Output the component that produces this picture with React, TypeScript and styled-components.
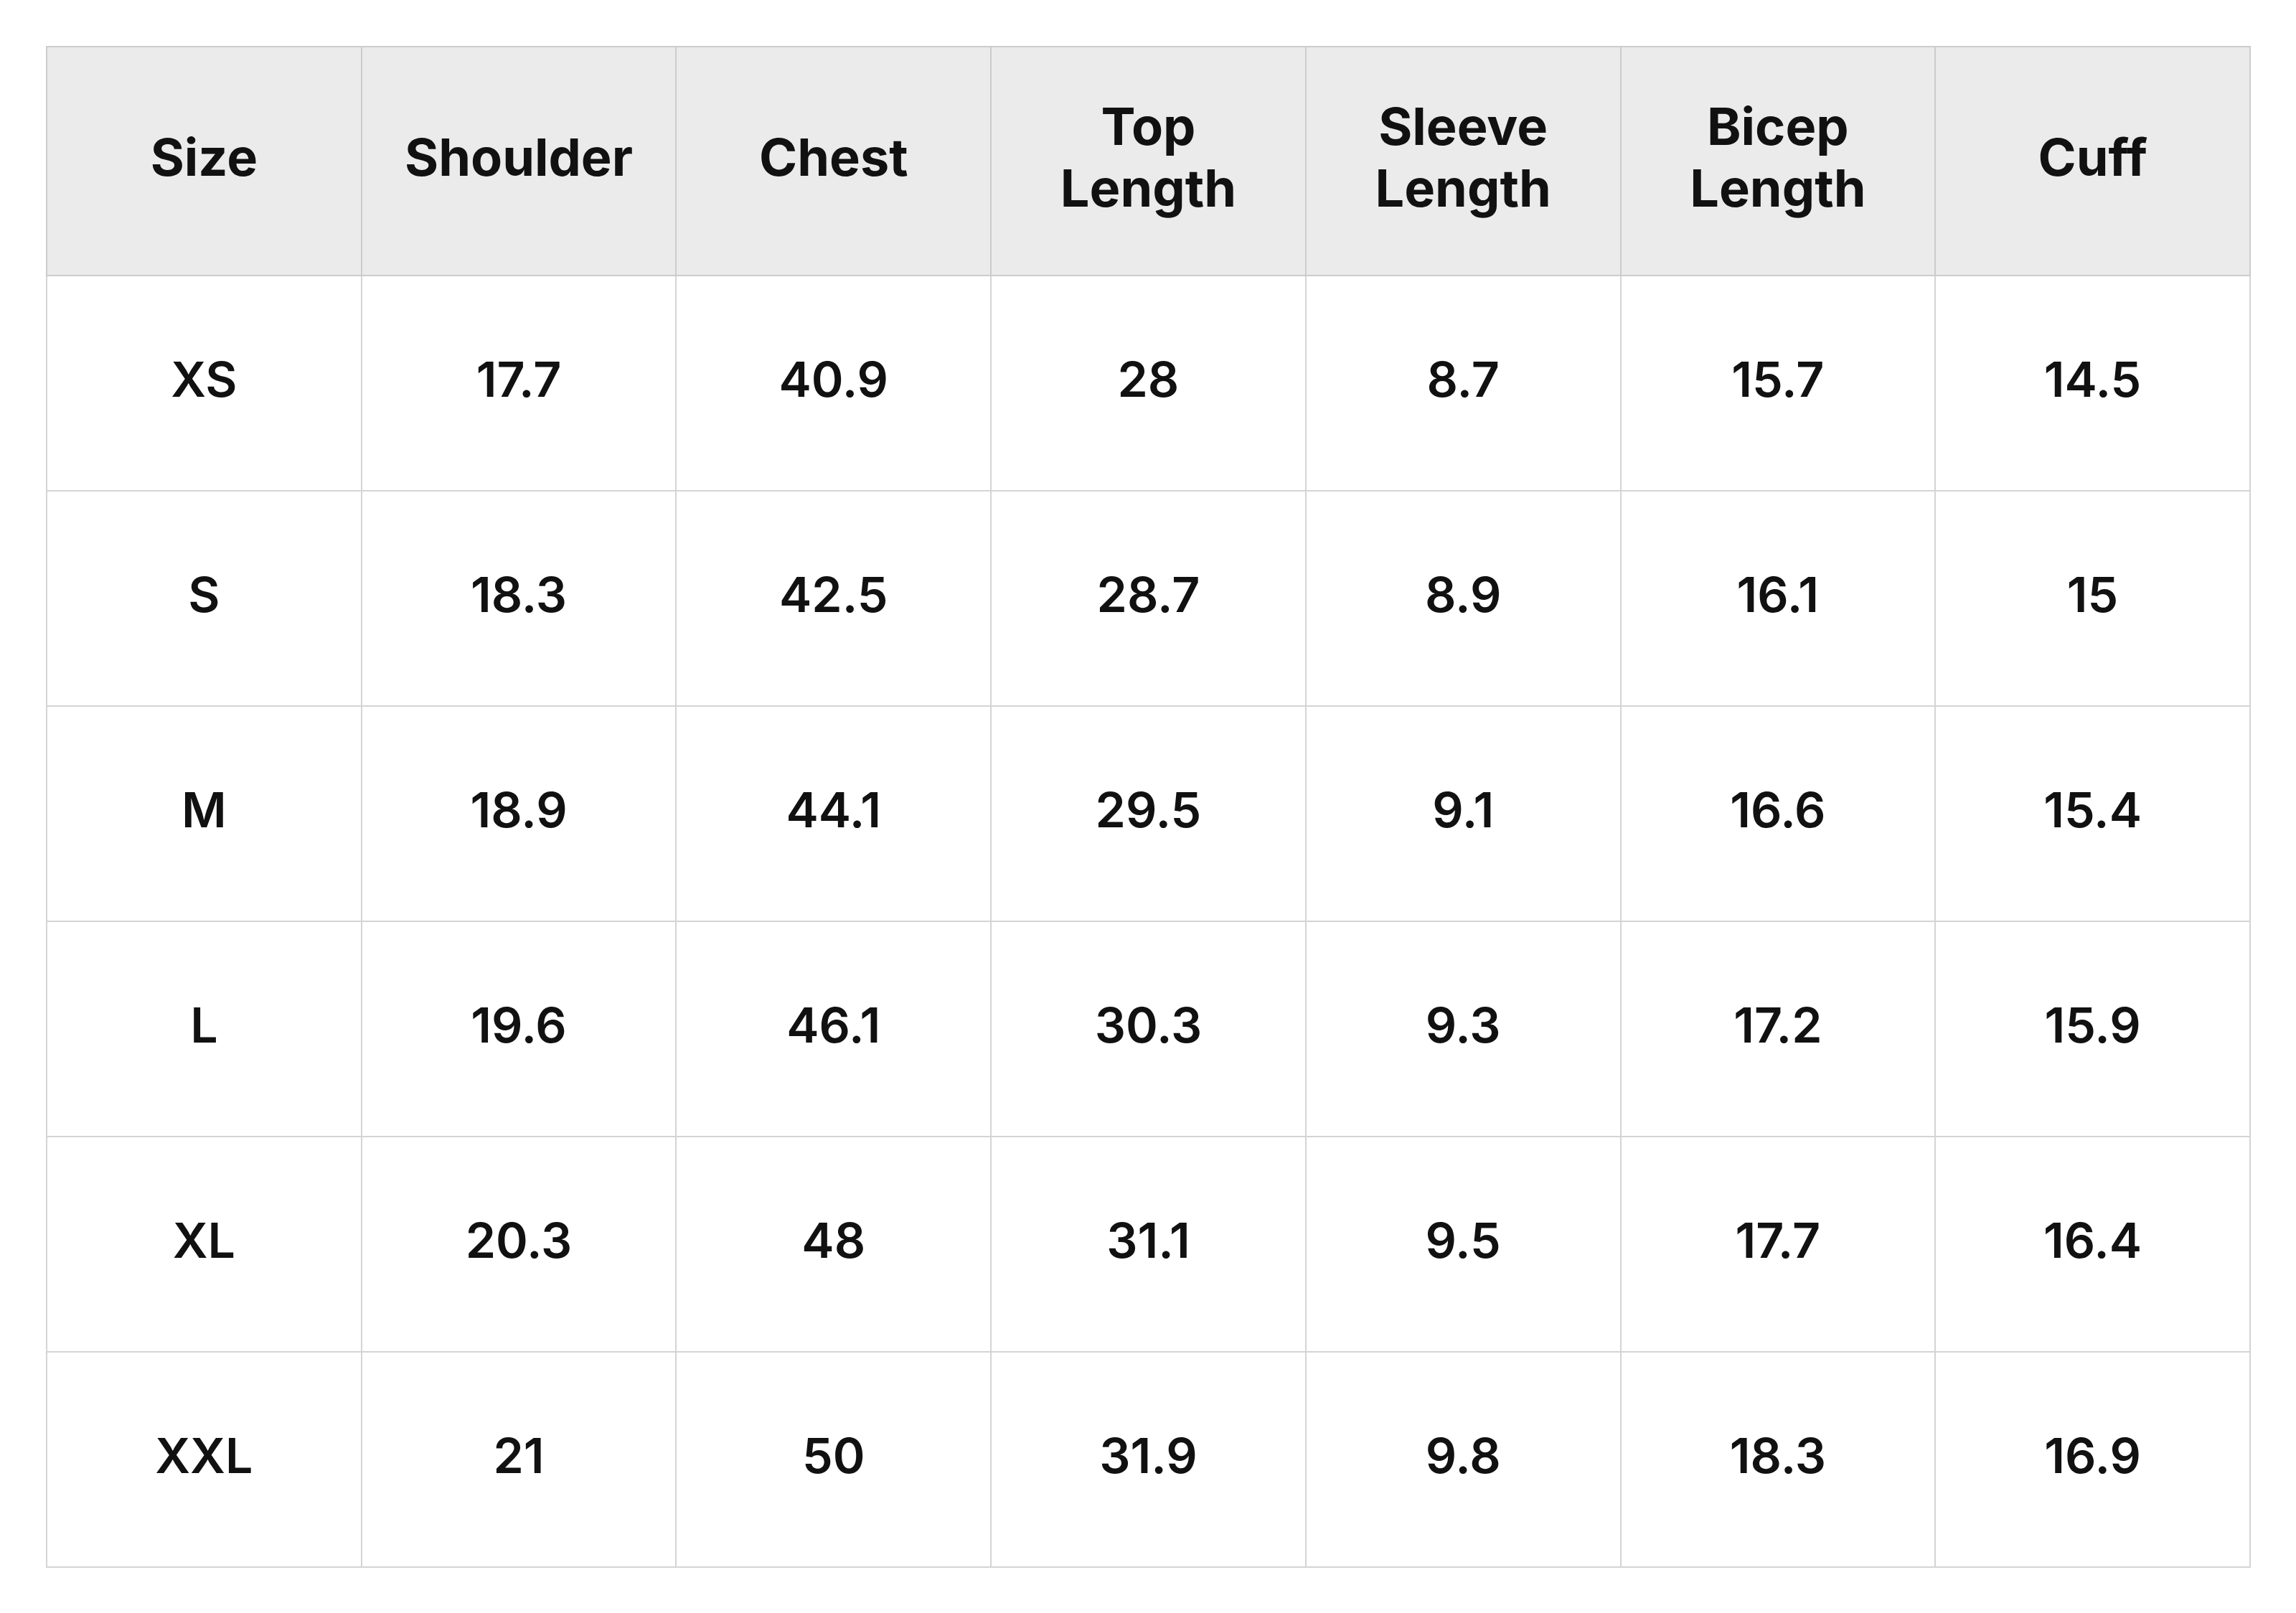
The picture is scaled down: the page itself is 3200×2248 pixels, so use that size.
import React from 'react';
import styled, { createGlobalStyle } from 'styled-components';

const COLUMNS = ['Size', 'Shoulder', 'Chest', 'Top Length', 'Sleeve Length', 'Bicep Length', 'Cuff'];

const ROWS = [
  ['XS', '17.7', '40.9', '28', '8.7', '15.7', '14.5'],
  ['S', '18.3', '42.5', '28.7', '8.9', '16.1', '15'],
  ['M', '18.9', '44.1', '29.5', '9.1', '16.6', '15.4'],
  ['L', '19.6', '46.1', '30.3', '9.3', '17.2', '15.9'],
  ['XL', '20.3', '48', '31.1', '9.5', '17.7', '16.4'],
  ['XXL', '21', '50', '31.9', '9.8', '18.3', '16.9'],
];

const GlobalStyle = createGlobalStyle`
  html, body {
    margin: 0;
    padding: 0;
    background: #ffffff;
  }
  body {
    font-family: Inter, "Noto Sans", sans-serif;
    color: #111111;
  }
`;

const Page = styled.div`
  width: 3200px;
  height: 2248px;
  box-sizing: border-box;
  padding: 64px 63px 0 64px;
`;

const Table = styled.table`
  width: 100%;
  table-layout: fixed;
  border-collapse: collapse;
  border: 2px solid #cfcfcf;
`;

const HeadCell = styled.th`
  height: 305px;
  padding: 0 40px 12px;
  background: #ebebeb;
  border: 2px solid #cccccc;
  font-size: 72px;
  font-weight: 700;
  line-height: 86px;
  text-align: center;
  vertical-align: middle;
  color: #111111;
`;

const Cell = styled.td`
  height: 286px;
  padding: 0 0 12px;
  border: 2px solid #d4d4d4;
  font-size: 68px;
  font-weight: 600;
  text-align: center;
  vertical-align: middle;
  color: #111111;
`;

export default function App() {
  return (
    <>
      <GlobalStyle />
      <Page>
        <Table>
          <thead>
            <tr>
              {COLUMNS.map((col) => (
                <HeadCell key={col}>
                  {col.split(' ').map((word, i) => (
                    <React.Fragment key={word}>
                      {i > 0 && <br />}
                      {word}
                    </React.Fragment>
                  ))}
                </HeadCell>
              ))}
            </tr>
          </thead>
          <tbody>
            {ROWS.map((row) => (
              <tr key={row[0]}>
                {row.map((value, i) => (
                  <Cell key={i}>{value}</Cell>
                ))}
              </tr>
            ))}
          </tbody>
        </Table>
      </Page>
    </>
  );
}
